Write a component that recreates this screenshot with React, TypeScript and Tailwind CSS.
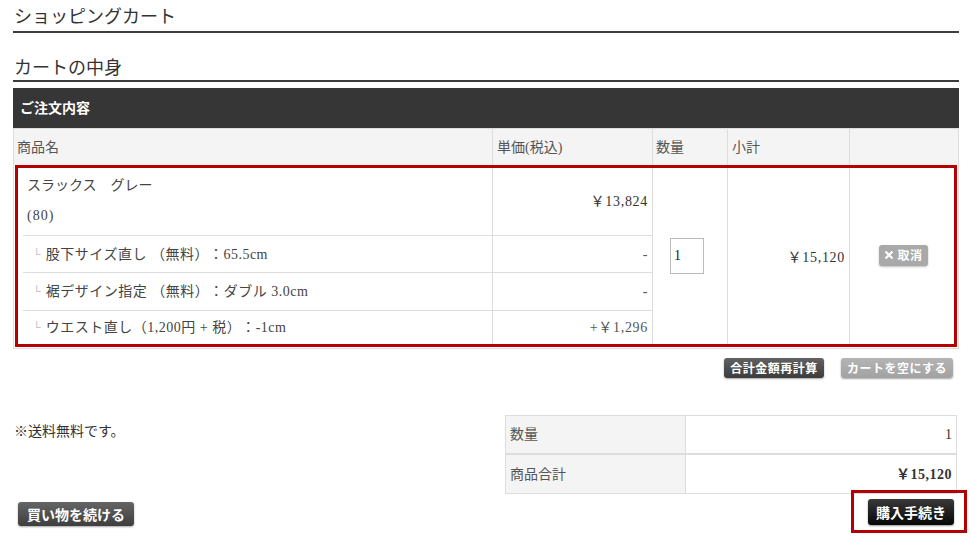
const SERIF = 'font-["Liberation_Serif","Noto_Sans_CJK_JP",serif]'

const OPTIONS = [
    { label: '股下サイズ直し （無料）：65.5cm', price: '-', h: 'h-[37px]' },
    { label: '裾デザイン指定 （無料）：ダブル 3.0cm', price: '-', h: 'h-[38px]' },
    { label: 'ウエスト直し（1,200円 + 税）：-1cm', price: '+￥1,296', h: 'h-[34px]' },
]

function Btn({ children, tone }: { children: React.ReactNode; tone: 'dark' | 'grey' }) {
    const tones = {
        dark: 'bg-gradient-to-b from-[#626262] to-[#3c3c3c]',
        grey: 'bg-gradient-to-b from-[#b4b4b4] to-[#a2a2a2]',
    }
    return (
        <button
            className={`${tones[tone]} rounded-[3px] px-[6px] font-["Noto_Sans_CJK_JP",sans-serif] text-[12px] font-bold leading-[20px] tracking-[0.5px] text-white shadow-[0_1px_2px_rgba(0,0,0,0.35)]`}
        >
            {children}
        </button>
    )
}

export default function App() {
    return (
        <div
            className={`${SERIF} h-[536px] w-[971px] overflow-hidden bg-white text-[14px] text-[#333] [text-spacing-trim:space-all]`}
        >
            <div className="ml-[13px] w-[946px]">
                <h1 className="border-b-2 border-[#3c3c3c] pb-[2px] pl-[1px] pt-[5px] text-[18px] font-normal leading-[24px]">
                    ショッピングカート
                </h1>
                <h2 className="mt-[23px] border-b-2 border-[#3c3c3c] pl-[1px] text-[18px] font-normal leading-[24px]">
                    カートの中身
                </h2>

                <div className="mt-[6px] flex h-[40px] items-center bg-[#363636] pl-[7px] text-[14px] font-bold text-white">
                    ご注文内容
                </div>

                <div className="border-x border-b border-[#dddddd]">
                    <div className="grid h-[37px] grid-cols-[478px_160px_75px_122px_109px] border-t border-[#dddddd] bg-[#f4f4f4] text-[#555]">
                        <div className="flex items-center pl-[3px]">商品名</div>
                        <div className="flex items-center border-l border-[#dddddd] pl-[4px]">単価(税込)</div>
                        <div className="flex items-center border-l border-[#dddddd] pl-[3px]">数量</div>
                        <div className="flex items-center border-l border-[#dddddd] pl-[4px]">小計</div>
                        <div className="border-l border-[#dddddd]" />
                    </div>

                    <div className="mx-px mb-px flex border-[3px] border-[#b40000]">
                        <div className="w-[634px]">
                            <div className="grid h-[67px] grid-cols-[474px_160px]">
                                <div className="pl-[9px] pt-[3px] leading-[30px] text-[#444]">
                                    <div>スラックス　グレー</div>
                                    <div className="tracking-[1px]">(80)</div>
                                </div>
                                <div className="flex items-center justify-end border-l border-[#dddddd] pr-[4px] tracking-[0.7px]">
                                    ￥13,824
                                </div>
                            </div>
                            {OPTIONS.map((o) => (
                                <div key={o.label} className={`grid ${o.h} grid-cols-[474px_160px]`}>
                                    <div className="pl-[5px]">
                                        <div className="flex h-full items-center gap-[5px] border-t border-[#dddddd] pl-[10px] text-[#444]">
                                            <span className="text-[11px] text-[#bbbbbb]">└</span>
                                            <span className="tracking-[0.5px]">{o.label}</span>
                                        </div>
                                    </div>
                                    <div className="flex items-center justify-end border-l border-t border-[#dddddd] pr-[4px] tracking-[0.7px] text-[#555]">
                                        {o.price}
                                    </div>
                                </div>
                            ))}
                        </div>
                        <div className="flex w-[75px] items-center justify-center border-l border-[#dddddd] pr-[6px]">
                            <input
                                defaultValue="1"
                                className="h-[36px] w-[34px] border border-[#bbbbbb] pl-[3px] text-[14px] text-[#222] outline-none"
                            />
                        </div>
                        <div className="flex w-[122px] items-center justify-end border-l border-[#dddddd] pr-[4px] pt-[2px] tracking-[0.7px]">
                            ￥15,120
                        </div>
                        <div className="flex w-[105px] items-center justify-center border-l border-[#dddddd] pb-[2px] pl-[3px]">
                            <button className="flex h-[21px] items-center gap-[3px] rounded-[3px] bg-[#a9a9a9] px-[5px] font-['Noto_Sans_CJK_JP',sans-serif] text-[12px] font-bold tracking-[0.5px] text-white shadow-[0_1px_2px_rgba(0,0,0,0.25)]">
                                <svg width="10" height="10" viewBox="0 0 10 10">
                                    <path d="M1.5 1.5 L8.5 8.5 M8.5 1.5 L1.5 8.5" stroke="white" strokeWidth="2.2" />
                                </svg>
                                取消
                            </button>
                        </div>
                    </div>
                </div>

                <div className="mr-[6px] mt-[9px] flex justify-end gap-[17px]">
                    <Btn tone="dark">合計金額再計算</Btn>
                    <Btn tone="grey">カートを空にする</Btn>
                </div>

                <div className="mt-[37px] flex justify-between">
                    <p className="pl-px pt-[7px] leading-[20px]">※送料無料です。</p>
                    <div className="mr-[2px] w-[452px] border border-[#dddddd]">
                        <div className="grid h-[38px] grid-cols-[180px_1fr] border-b border-[#dddddd]">
                            <div className="flex items-center border-r border-[#dddddd] bg-[#f4f4f4] pl-[4px] text-[#555]">数量</div>
                            <div className="flex items-center justify-end pr-[4px]">1</div>
                        </div>
                        <div className="grid h-[39px] grid-cols-[180px_1fr] border-t border-[#dddddd]">
                            <div className="flex items-center border-r border-[#dddddd] bg-[#f4f4f4] pl-[4px] text-[#555]">商品合計</div>
                            <div className="flex items-center justify-end pr-[4px] font-bold tracking-[0.5px]">￥15,120</div>
                        </div>
                    </div>
                </div>

                <div className="-mt-[4px] flex items-start justify-between">
                    <div className="ml-[5px] mt-[12px]">
                        <button className="h-[24px] rounded-[3px] bg-gradient-to-b from-[#656565] to-[#3e3e3e] px-[9px] font-['Noto_Sans_CJK_JP',sans-serif] text-[14px] font-bold text-white shadow-[0_1px_2px_rgba(0,0,0,0.35)]">
                            買い物を続ける
                        </button>
                    </div>
                    <div className="-mr-[8px] border-[3px] border-[#b40000] pb-[5px] pl-[14px] pr-[10px] pt-[6px]">
                        <button className="h-[26px] rounded-[3px] bg-gradient-to-b from-[#3a3a3a] to-[#080808] px-[8px] font-['Noto_Sans_CJK_JP',sans-serif] text-[14px] font-bold text-white shadow-[0_1px_2px_rgba(0,0,0,0.4)]">
                            購入手続き
                        </button>
                    </div>
                </div>
            </div>
        </div>
    )
}
